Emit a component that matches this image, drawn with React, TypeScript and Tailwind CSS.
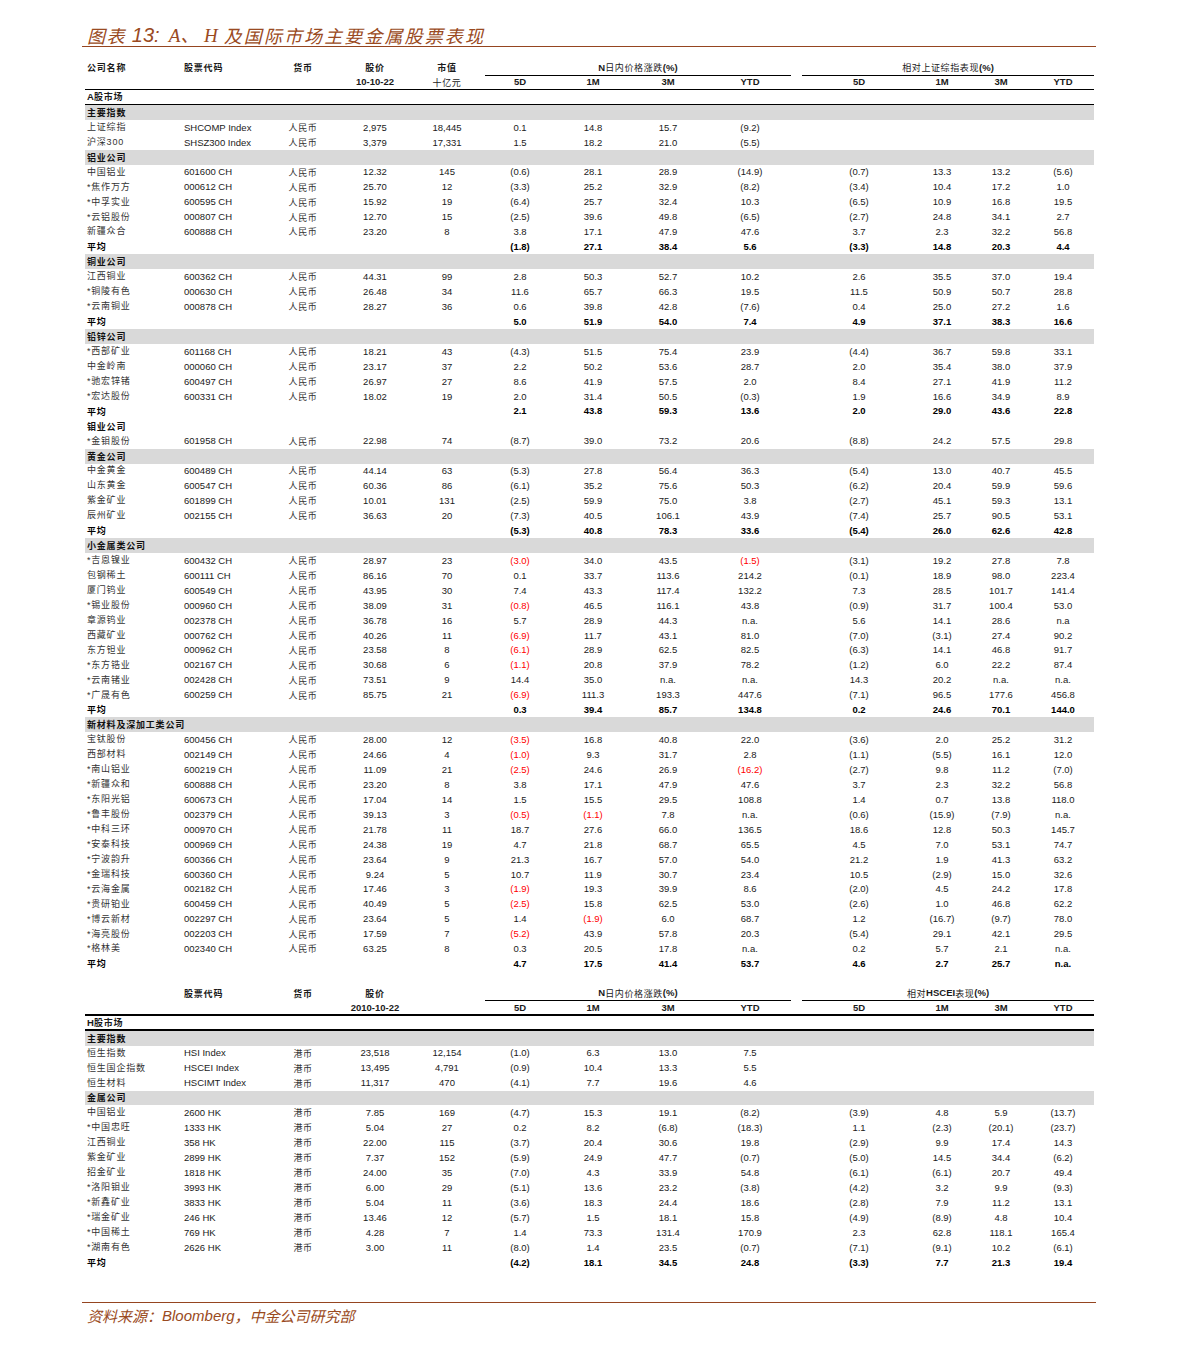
import React from "react";

const COLS =
  "grid grid-cols-[98px_100px_40px_104px_40px_106px_40px_110px_54px_25px_114px_52px_66px_58px_2px]";
const F = "font-['Liberation_Sans','Noto_Sans_CJK_SC',sans-serif]";
const CJK = "font-['Noto_Sans_CJK_SC',sans-serif]";

const A_ROWS: string[] = [
  "#主要指数",
  "上证综指|SHCOMP Index|2,975|18,445|0.1|14.8|15.7|(9.2)||||",
  "沪深300|SHSZ300 Index|3,379|17,331|1.5|18.2|21.0|(5.5)||||",
  "#铝业公司",
  "中国铝业|601600 CH|12.32|145|(0.6)|28.1|28.9|(14.9)|(0.7)|13.3|13.2|(5.6)",
  "*焦作万方|000612 CH|25.70|12|(3.3)|25.2|32.9|(8.2)|(3.4)|10.4|17.2|1.0",
  "*中孚实业|600595 CH|15.92|19|(6.4)|25.7|32.4|10.3|(6.5)|10.9|16.8|19.5",
  "*云铝股份|000807 CH|12.70|15|(2.5)|39.6|49.8|(6.5)|(2.7)|24.8|34.1|2.7",
  "新疆众合|600888 CH|23.20|8|3.8|17.1|47.9|47.6|3.7|2.3|32.2|56.8",
  "~(1.8)|27.1|38.4|5.6|(3.3)|14.8|20.3|4.4",
  "#铜业公司",
  "江西铜业|600362 CH|44.31|99|2.8|50.3|52.7|10.2|2.6|35.5|37.0|19.4",
  "*铜陵有色|000630 CH|26.48|34|11.6|65.7|66.3|19.5|11.5|50.9|50.7|28.8",
  "*云南铜业|000878 CH|28.27|36|0.6|39.8|42.8|(7.6)|0.4|25.0|27.2|1.6",
  "~5.0|51.9|54.0|7.4|4.9|37.1|38.3|16.6",
  "#铅锌公司",
  "*西部矿业|601168 CH|18.21|43|(4.3)|51.5|75.4|23.9|(4.4)|36.7|59.8|33.1",
  "中金岭南|000060 CH|23.17|37|2.2|50.2|53.6|28.7|2.0|35.4|38.0|37.9",
  "*驰宏锌锗|600497 CH|26.97|27|8.6|41.9|57.5|2.0|8.4|27.1|41.9|11.2",
  "*宏达股份|600331 CH|18.02|19|2.0|31.4|50.5|(0.3)|1.9|16.6|34.9|8.9",
  "~2.1|43.8|59.3|13.6|2.0|29.0|43.6|22.8",
  "@钼业公司",
  "*金钼股份|601958 CH|22.98|74|(8.7)|39.0|73.2|20.6|(8.8)|24.2|57.5|29.8",
  "#黄金公司",
  "中金黄金|600489 CH|44.14|63|(5.3)|27.8|56.4|36.3|(5.4)|13.0|40.7|45.5",
  "山东黄金|600547 CH|60.36|86|(6.1)|35.2|75.6|50.3|(6.2)|20.4|59.9|59.6",
  "紫金矿业|601899 CH|10.01|131|(2.5)|59.9|75.0|3.8|(2.7)|45.1|59.3|13.1",
  "辰州矿业|002155 CH|36.63|20|(7.3)|40.5|106.1|43.9|(7.4)|25.7|90.5|53.1",
  "~(5.3)|40.8|78.3|33.6|(5.4)|26.0|62.6|42.8",
  "#小金属类公司",
  "*吉恩镍业|600432 CH|28.97|23|!(3.0)|34.0|43.5|!(1.5)|(3.1)|19.2|27.8|7.8",
  "包钢稀土|600111 CH|86.16|70|0.1|33.7|113.6|214.2|(0.1)|18.9|98.0|223.4",
  "厦门钨业|600549 CH|43.95|30|7.4|43.3|117.4|132.2|7.3|28.5|101.7|141.4",
  "*锡业股份|000960 CH|38.09|31|!(0.8)|46.5|116.1|43.8|(0.9)|31.7|100.4|53.0",
  "章源钨业|002378 CH|36.78|16|5.7|28.9|44.3|n.a.|5.6|14.1|28.6|n.a",
  "西藏矿业|000762 CH|40.26|11|!(6.9)|11.7|43.1|81.0|(7.0)|(3.1)|27.4|90.2",
  "东方钽业|000962 CH|23.58|8|!(6.1)|28.9|62.5|82.5|(6.3)|14.1|46.8|91.7",
  "*东方锆业|002167 CH|30.68|6|!(1.1)|20.8|37.9|78.2|(1.2)|6.0|22.2|87.4",
  "*云南锗业|002428 CH|73.51|9|14.4|35.0|n.a.|n.a.|14.3|20.2|n.a.|n.a.",
  "*广晟有色|600259 CH|85.75|21|!(6.9)|111.3|193.3|447.6|(7.1)|96.5|177.6|456.8",
  "~0.3|39.4|85.7|134.8|0.2|24.6|70.1|144.0",
  "#新材料及深加工类公司",
  "宝钛股份|600456 CH|28.00|12|!(3.5)|16.8|40.8|22.0|(3.6)|2.0|25.2|31.2",
  "西部材料|002149 CH|24.66|4|!(1.0)|9.3|31.7|2.8|(1.1)|(5.5)|16.1|12.0",
  "*南山铝业|600219 CH|11.09|21|!(2.5)|24.6|26.9|!(16.2)|(2.7)|9.8|11.2|(7.0)",
  "*新疆众和|600888 CH|23.20|8|3.8|17.1|47.9|47.6|3.7|2.3|32.2|56.8",
  "*东阳光铝|600673 CH|17.04|14|1.5|15.5|29.5|108.8|1.4|0.7|13.8|118.0",
  "*鲁丰股份|002379 CH|39.13|3|!(0.5)|!(1.1)|7.8|n.a.|(0.6)|(15.9)|(7.9)|n.a.",
  "*中科三环|000970 CH|21.78|11|18.7|27.6|66.0|136.5|18.6|12.8|50.3|145.7",
  "*安泰科技|000969 CH|24.38|19|4.7|21.8|68.7|65.5|4.5|7.0|53.1|74.7",
  "*宁波韵升|600366 CH|23.64|9|21.3|16.7|57.0|54.0|21.2|1.9|41.3|63.2",
  "*金瑞科技|600360 CH|9.24|5|10.7|11.9|30.7|23.4|10.5|(2.9)|15.0|32.6",
  "*云海金属|002182 CH|17.46|3|!(1.9)|19.3|39.9|8.6|(2.0)|4.5|24.2|17.8",
  "*贵研铂业|600459 CH|40.49|5|!(2.5)|15.8|62.5|53.0|(2.6)|1.0|46.8|62.2",
  "*博云新材|002297 CH|23.64|5|1.4|!(1.9)|6.0|68.7|1.2|(16.7)|(9.7)|78.0",
  "*海亮股份|002203 CH|17.59|7|!(5.2)|43.9|57.8|20.3|(5.4)|29.1|42.1|29.5",
  "*格林美|002340 CH|63.25|8|0.3|20.5|17.8|n.a.|0.2|5.7|2.1|n.a.",
  "~4.7|17.5|41.4|53.7|4.6|2.7|25.7|n.a.",
];

const H_ROWS: string[] = [
  "#主要指数",
  "恒生指数|HSI Index|23,518|12,154|(1.0)|6.3|13.0|7.5||||",
  "恒生国企指数|HSCEI Index|13,495|4,791|(0.9)|10.4|13.3|5.5||||",
  "恒生材料|HSCIMT Index|11,317|470|(4.1)|7.7|19.6|4.6||||",
  "#金属公司",
  "中国铝业|2600 HK|7.85|169|(4.7)|15.3|19.1|(8.2)|(3.9)|4.8|5.9|(13.7)",
  "*中国忠旺|1333 HK|5.04|27|0.2|8.2|(6.8)|(18.3)|1.1|(2.3)|(20.1)|(23.7)",
  "江西铜业|358 HK|22.00|115|(3.7)|20.4|30.6|19.8|(2.9)|9.9|17.4|14.3",
  "紫金矿业|2899 HK|7.37|152|(5.9)|24.9|47.7|(0.7)|(5.0)|14.5|34.4|(6.2)",
  "招金矿业|1818 HK|24.00|35|(7.0)|4.3|33.9|54.8|(6.1)|(6.1)|20.7|49.4",
  "*洛阳钼业|3993 HK|6.00|29|(5.1)|13.6|23.2|(3.8)|(4.2)|3.2|9.9|(9.3)",
  "*新鑫矿业|3833 HK|5.04|11|(3.6)|18.3|24.4|18.6|(2.8)|7.9|11.2|13.1",
  "*瑞金矿业|246 HK|13.46|12|(5.7)|1.5|18.1|15.8|(4.9)|(8.9)|4.8|10.4",
  "*中国稀土|769 HK|4.28|7|1.4|73.3|131.4|170.9|2.3|62.8|118.1|165.4",
  "*湖南有色|2626 HK|3.00|11|(8.0)|1.4|23.5|(0.7)|(7.1)|(9.1)|10.2|(6.1)",
  "~(4.2)|18.1|34.5|24.8|(3.3)|7.7|21.3|19.4",
];

function Cell({ v }: { v?: string }) {
  if (!v) return <div />;
  const red = v.startsWith("!");
  return (
    <div className={`text-center whitespace-nowrap ${red ? "text-[#ff0000]" : ""}`}>
      {red ? v.slice(1) : v}
    </div>
  );
}

function Values({ vals }: { vals: string[] }) {
  return (
    <>
      <Cell v={vals[0]} />
      <Cell v={vals[1]} />
      <Cell v={vals[2]} />
      <Cell v={vals[3]} />
      <div />
      <Cell v={vals[4]} />
      <Cell v={vals[5]} />
      <Cell v={vals[6]} />
      <Cell v={vals[7]} />
      <div />
    </>
  );
}

function DataRow({ s, cur }: { s: string; cur: string }) {
  const k = s[0];
  if (k === "#" || k === "@") {
    return (
      <div className={`${COLS} h-[14.95px] items-center ${k === "#" ? "bg-[#d9d9d9]" : ""}`}>
        <div className={`${CJK} pl-[2px] text-[9px] font-bold tracking-[0.8px] whitespace-nowrap text-[#111]`}>
          {s.slice(1)}
        </div>
      </div>
    );
  }
  if (k === "~") {
    const vals = s.slice(1).split("|");
    return (
      <div className={`${COLS} h-[14.95px] items-center font-bold text-[#000]`}>
        <div className={`${CJK} pl-[2px] text-[9px] tracking-[0.8px]`}>平均</div>
        <div />
        <div />
        <div />
        <div />
        <Values vals={vals} />
      </div>
    );
  }
  const f = s.split("|");
  return (
    <div className={`${COLS} h-[14.95px] items-center`}>
      <div className="pl-[2px] text-[9px] tracking-[0.8px] whitespace-nowrap text-[#333]">{f[0]}</div>
      <div className="pl-[1px] whitespace-nowrap">{f[1]}</div>
      <div className={`${CJK} text-center text-[9px] tracking-[0.6px] text-[#333]`}>{cur}</div>
      <Cell v={f[2]} />
      <Cell v={f[3]} />
      <Values vals={f.slice(4)} />
    </div>
  );
}

function SubHeads() {
  return (
    <>
      <div className="text-center">5D</div>
      <div className="text-center">1M</div>
      <div className="text-center">3M</div>
      <div className="text-center">YTD</div>
      <div />
      <div className="text-center">5D</div>
      <div className="text-center">1M</div>
      <div className="text-center">3M</div>
      <div className="text-center">YTD</div>
      <div />
    </>
  );
}

function GroupCells({ right }: { right: React.ReactNode }) {
  return (
    <>
      <div className="col-span-5 h-full pl-[18px] pr-[11px]">
        <div className="h-full flex items-center justify-center border-b-[1.5px] border-black">
          <span className="font-bold">N</span>
          <span className={`${CJK} text-[9px] tracking-[0.6px]`}>日内价格涨跌</span>
          <span className="font-bold">(%)</span>
        </div>
      </div>
      <div className="col-span-5 h-full">
        <div className="h-full flex items-center justify-center border-b-[1.5px] border-black">{right}</div>
      </div>
    </>
  );
}

const HD = `${CJK} text-[9px] font-bold tracking-[0.8px]`;

export default function App() {
  return (
    <div className={`${F} w-[1191px] min-h-[1345px] bg-white text-[9.5px] leading-none text-[#1a1a1a]`}>
      <div className="pl-[82px] pt-[24px] w-[1096px]">
        {/* Title */}
        <div className="h-[23px] flex items-center border-b-[1.5px] border-[#954520] text-[#9a4a22] italic">
          <span className={`${CJK} text-[18px] tracking-[1.4px] pl-[5px]`}>图表</span>
          <span className="font-['Liberation_Sans',sans-serif] text-[20px] ml-[6px]">13:</span>
          <span className="font-['Liberation_Serif','Noto_Sans_CJK_SC',serif] text-[19px] ml-[9px]">A、 H</span>
          <span className={`${CJK} text-[18px] tracking-[2.1px] ml-[6px]`}>及国际市场主要金属股票表现</span>
        </div>

        {/* A table */}
        <div className="ml-[3px] w-[1009px] mt-[13px]">
          <div className={`${COLS} h-[15.5px] items-center`}>
            <div className={`${HD} pl-[2px]`}>公司名称</div>
            <div className={`${HD} pl-[1px]`}>股票代码</div>
            <div className={`${HD} text-center`}>货币</div>
            <div className={`${HD} text-center`}>股价</div>
            <div className={`${HD} text-center`}>市值</div>
            <GroupCells
              right={
                <>
                  <span className={`${CJK} text-[9px] tracking-[0.6px]`}>相对上证综指表现</span>
                  <span className="font-bold">(%)</span>
                </>
              }
            />
          </div>
          <div className={`${COLS} h-[13px] items-center font-bold`}>
            <div />
            <div />
            <div />
            <div className="text-center">10-10-22</div>
            <div className={`${CJK} text-center text-[9px] font-normal tracking-[0.6px]`}>十亿元</div>
            <SubHeads />
          </div>
          <div className="h-[1.5px] bg-black" />
          <div className="h-[13.5px] flex items-center pl-[2px] font-bold">
            <span>A</span>
            <span className={`${CJK} text-[9px] tracking-[0.8px]`}>股市场</span>
          </div>
          <div className="h-[1.5px] bg-black" />
          {A_ROWS.map((s, i) => (
            <DataRow key={i} s={s} cur="人民币" />
          ))}

          {/* H table */}
          <div className="mt-[14.4px]" />
          <div className={`${COLS} h-[15.5px] items-center`}>
            <div />
            <div className={`${HD} pl-[1px]`}>股票代码</div>
            <div className={`${HD} text-center`}>货币</div>
            <div className={`${HD} text-center`}>股价</div>
            <div />
            <GroupCells
              right={
                <>
                  <span className={`${CJK} text-[9px] tracking-[0.6px]`}>相对</span>
                  <span className="font-bold">HSCEI</span>
                  <span className={`${CJK} text-[9px] tracking-[0.6px]`}>表现</span>
                  <span className="font-bold">(%)</span>
                </>
              }
            />
          </div>
          <div className={`${COLS} h-[13px] items-center font-bold`}>
            <div />
            <div />
            <div />
            <div className="text-center">2010-10-22</div>
            <div />
            <SubHeads />
          </div>
          <div className="h-[1.5px] bg-black" />
          <div className="h-[13.5px] flex items-center pl-[2px] font-bold">
            <span>H</span>
            <span className={`${CJK} text-[9px] tracking-[0.8px]`}>股市场</span>
          </div>
          <div className="h-[1.5px] bg-black" />
          {H_ROWS.map((s, i) => (
            <DataRow key={i} s={s} cur="港币" />
          ))}
        </div>

        {/* Footer */}
        <div className="mt-[32px] h-[1.5px] w-[1014px] bg-[#954520]" />
        <div className="h-[25px] flex items-center pl-[5px] italic text-[#9a4a22] text-[15px]">
          <span className={CJK}>资料来源：</span>
          <span className="font-['Liberation_Sans',sans-serif]">Bloomberg</span>
          <span className={CJK}>，中金公司研究部</span>
        </div>
      </div>
    </div>
  );
}
